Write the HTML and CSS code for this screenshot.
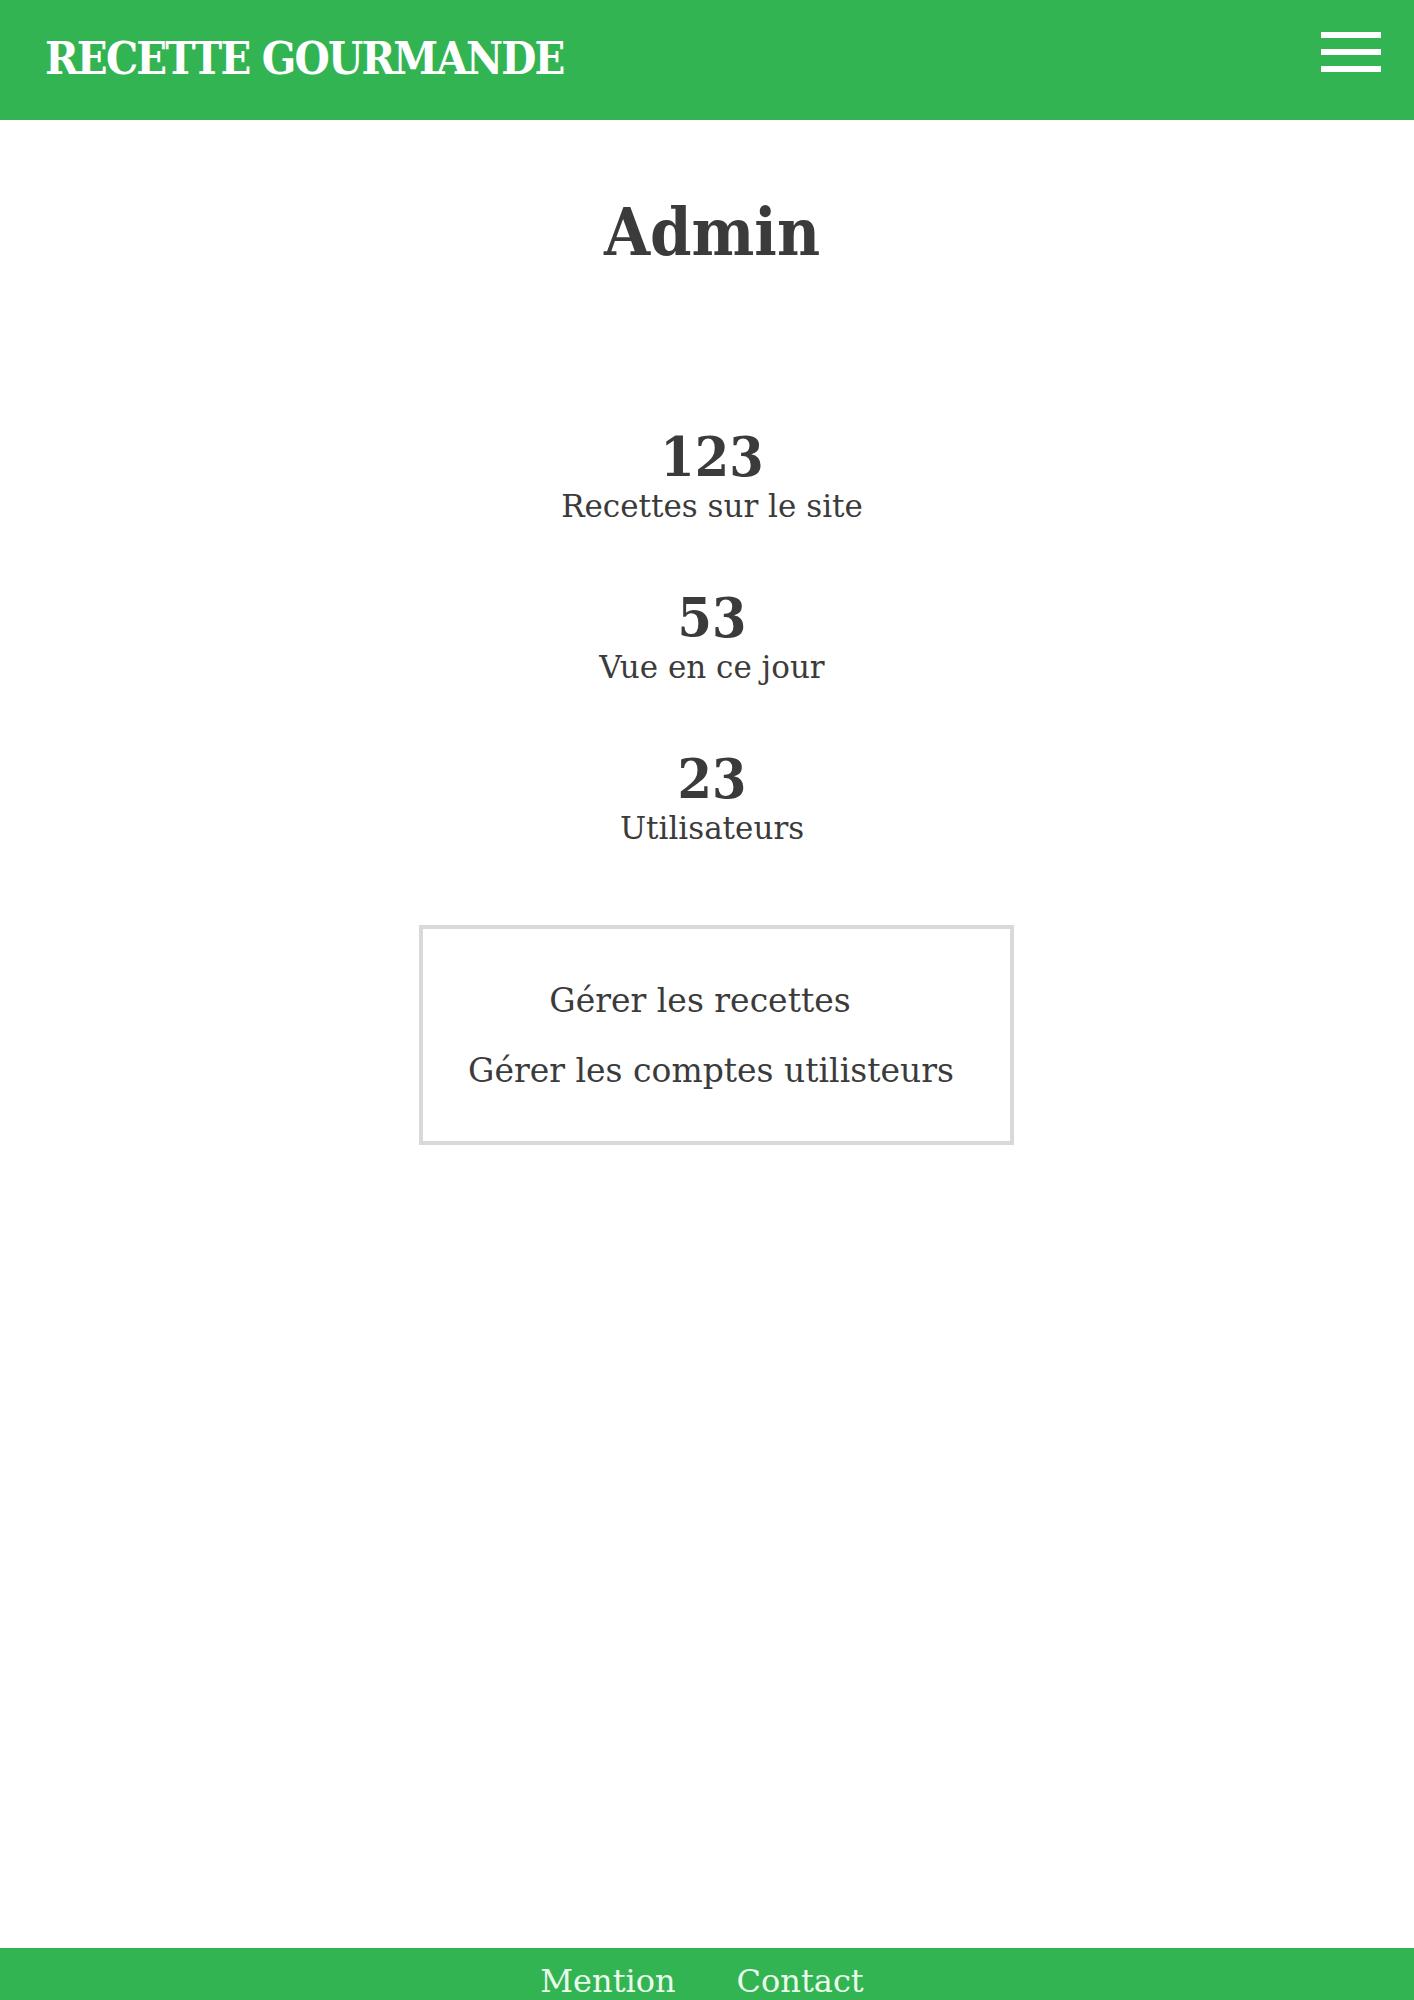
FILE: index.html
```
<!DOCTYPE html>
<html lang="fr">
<head>
<meta charset="utf-8">
<title>Recette Gourmande - Admin</title>
<link rel="stylesheet" href="styles.css">
</head>
<body>
<header class="site-header">
  <div class="brand">RECETTE GOURMANDE</div>
  <div class="burger" aria-label="Menu">
    <span class="bar"></span>
    <span class="bar"></span>
    <span class="bar"></span>
  </div>
</header>
<main class="main">
  <h1 class="title">Admin</h1>
  <section class="stats">
    <div class="stat">
      <div class="stat-num">123</div>
      <div class="stat-label">Recettes sur le site</div>
    </div>
    <div class="stat">
      <div class="stat-num">53</div>
      <div class="stat-label">Vue en ce jour</div>
    </div>
    <div class="stat">
      <div class="stat-num">23</div>
      <div class="stat-label">Utilisateurs</div>
    </div>
  </section>
  <nav class="admin-box">
    <a class="admin-link admin-link-first" href="#">Gérer les recettes</a>
    <a class="admin-link" href="#">Gérer les comptes utilisteurs</a>
  </nav>
</main>
<footer class="site-footer">
  <a class="foot-link" href="#">Mention</a>
  <a class="foot-link" href="#">Contact</a>
</footer>
</body>
</html>
```
FILE: styles.css
```
html, body {
  margin: 0;
  padding: 0;
}
body {
  font-family: "DejaVu Serif", "Liberation Serif", serif;
  color: #3b3b3b;
  background: #ffffff;
}
.site-header {
  height: 120px;
  background: #32b452;
  display: flex;
  justify-content: space-between;
  align-items: flex-start;
  padding: 0 33px 0 45px;
  box-sizing: border-box;
}
.brand {
  font-family: "DejaVu Serif Condensed", "DejaVu Serif", serif;
  font-weight: bold;
  font-size: 45px;
  line-height: 1;
  color: #ffffff;
  margin-top: 36px;
  letter-spacing: -1.8px;
}
.burger {
  margin-top: 32px;
  width: 60px;
  display: flex;
  flex-direction: column;
  gap: 11px;
}
.bar {
  display: block;
  height: 6px;
  background: #ffffff;
}
.main {
  min-height: 1828px;
  box-sizing: border-box;
  padding: 0 0 0 10px;
  display: flex;
  flex-direction: column;
  align-items: center;
}
.title {
  margin: 79px 0 0;
  font-family: "DejaVu Serif Condensed", "DejaVu Serif", serif;
  font-weight: bold;
  font-size: 66px;
  line-height: 1;
  color: #3b3b3b;
}
.stats {
  margin-top: 164px;
  display: flex;
  flex-direction: column;
  align-items: center;
  gap: 65px;
}
.stat {
  display: flex;
  flex-direction: column;
  align-items: center;
}
.stat-num {
  font-family: "DejaVu Serif Condensed", "DejaVu Serif", serif;
  font-weight: bold;
  font-size: 55px;
  line-height: 1;
}
.stat-label {
  margin-top: 4px;
  font-size: 31px;
  line-height: 1.2;
}
.admin-box {
  margin: 77px 0 0 8px;
  width: 595px;
  box-sizing: border-box;
  border: 4px solid #d9d9d9;
  padding: 55px 10px 54px 0;
  display: flex;
  flex-direction: column;
  align-items: center;
  gap: 37px;
}
.admin-link {
  font-size: 33px;
  line-height: 1;
  color: #3b3b3b;
  text-decoration: none;
}
.admin-link-first {
  margin-right: 22px;
}
.site-footer {
  background: #32b452;
  display: flex;
  justify-content: center;
  gap: 61px;
  padding: 14px 10px 16px 0;
}
.foot-link {
  font-size: 32px;
  line-height: 1.2;
  color: #e9fbea;
  text-decoration: none;
}
```
